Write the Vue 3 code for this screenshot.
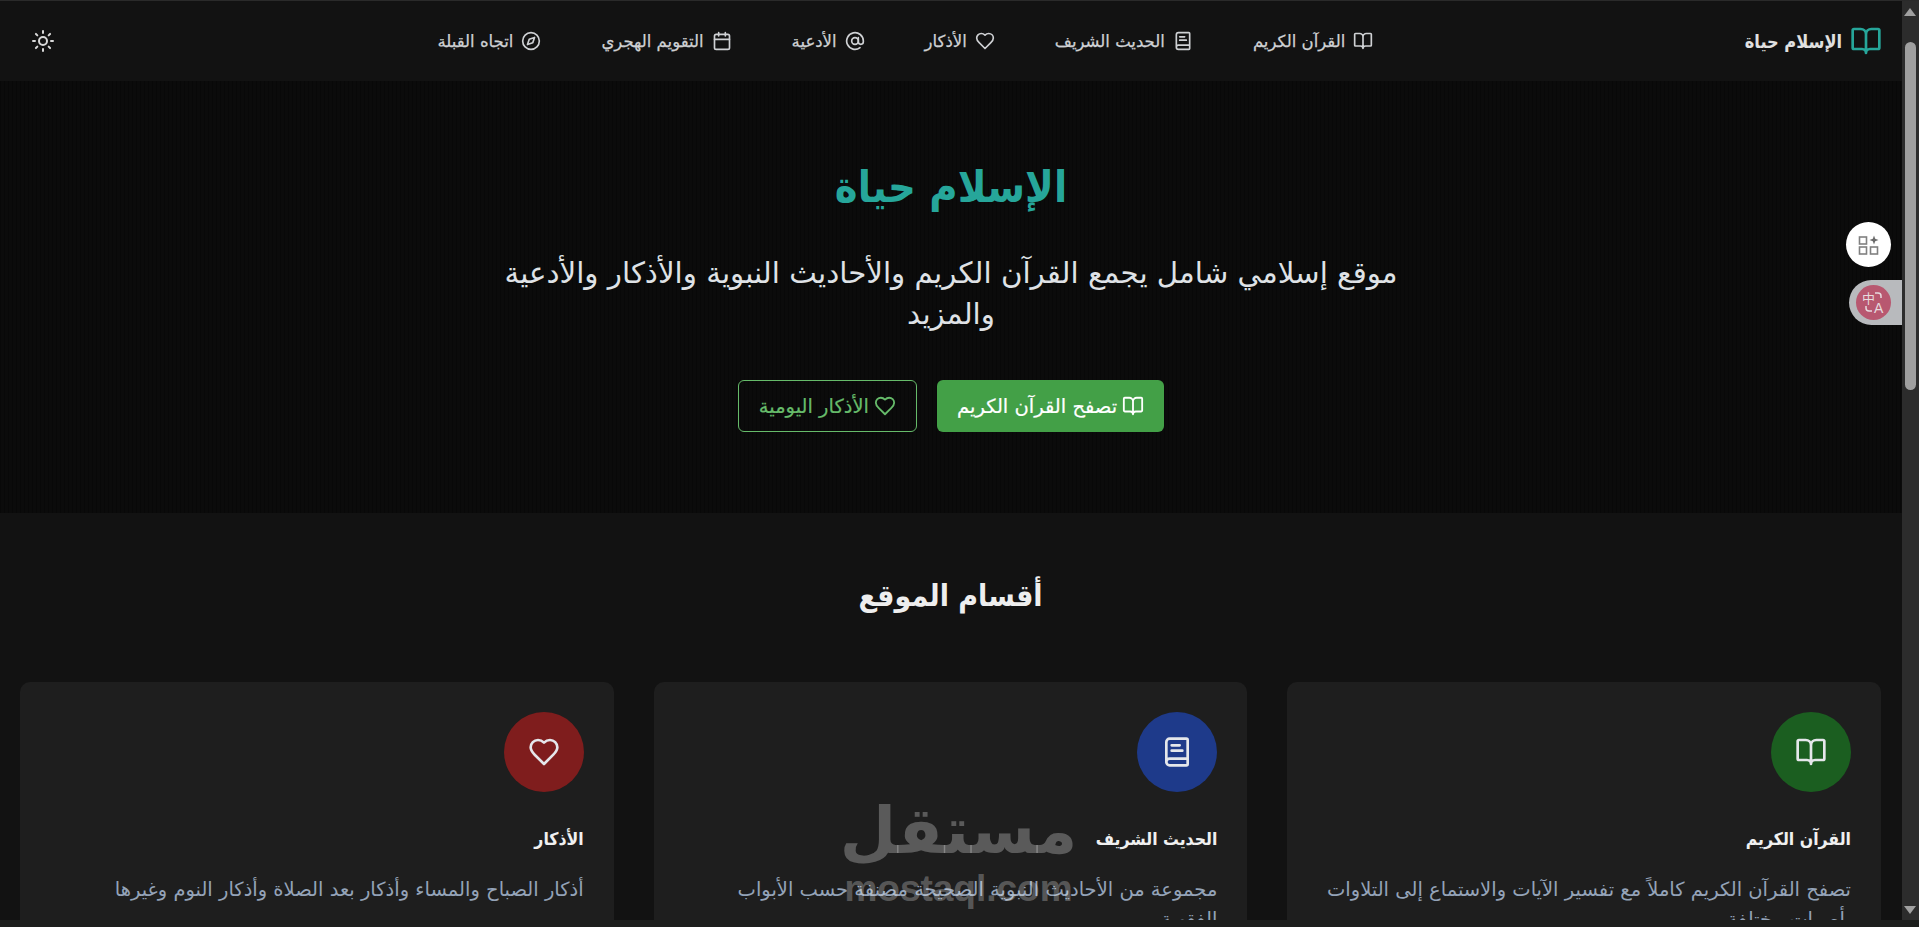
<template>
  <div class="screen">
    <div class="top-line"></div>
    <div class="window">
      <div class="page" dir="rtl">
        <header class="topbar">
          <a class="brand">
            <svg class="brand-icon" viewBox="0 0 24 24"><path :d="bookPath" /></svg>
            <span>الإسلام حياة</span>
          </a>
          <nav class="nav">
            <a v-for="item in navItems" :key="item.label" class="nav-link">
              <svg class="nav-icon" viewBox="0 0 24 24"><path v-for="d in item.icon" :key="d" :d="d" /></svg>
              <span>{{ item.label }}</span>
            </a>
          </nav>
          <svg class="theme-icon" viewBox="0 0 24 24">
            <circle cx="12" cy="12" r="4" />
            <path d="M12 2v2M12 20v2M4.93 4.93l1.41 1.41M17.66 17.66l1.41 1.41M2 12h2M20 12h2M6.34 17.66l-1.41 1.41M19.07 4.93l-1.41 1.41" />
          </svg>
        </header>

        <section class="hero">
          <h1>الإسلام حياة</h1>
          <p>موقع إسلامي شامل يجمع القرآن الكريم والأحاديث النبوية والأذكار والأدعية والمزيد</p>
          <div class="hero-buttons">
            <a class="btn btn-primary">
              <svg viewBox="0 0 24 24"><path :d="bookPath" /></svg>
              تصفح القرآن الكريم
            </a>
            <a class="btn btn-outline">
              <svg viewBox="0 0 24 24"><path :d="heartPath" /></svg>
              الأذكار اليومية
            </a>
          </div>
        </section>

        <section class="sections">
          <h2>أقسام الموقع</h2>
          <div class="cards">
            <article v-for="card in cards" :key="card.title" class="card">
              <div class="card-icon" :class="card.color">
                <svg viewBox="0 0 24 24"><path v-for="d in card.icon" :key="d" :d="d" /></svg>
              </div>
              <h3>{{ card.title }}</h3>
              <p>{{ card.text }}</p>
            </article>
          </div>
        </section>
      </div>

      <div class="scrollbar">
        <span class="arrow arrow-up"></span>
        <span class="thumb"></span>
        <span class="arrow arrow-down"></span>
      </div>

      <!-- floating browser extension buttons -->
      <div class="float-apps">
        <svg viewBox="0 0 22 22">
          <rect x="1.5" y="3" width="7" height="7" />
          <rect x="1.5" y="13" width="7" height="7" />
          <rect x="12.5" y="13" width="7" height="7" />
          <path class="spark" d="M16 1.5l1.2 3.3 3.3 1.2-3.3 1.2-1.2 3.3-1.2-3.3-3.3-1.2 3.3-1.2z" />
        </svg>
      </div>
      <div class="float-translate">
        <div class="translate-circle">
          <span class="zh">中</span>
          <span class="en">A</span>
          <svg viewBox="0 0 35 35">
            <path d="M19 8h3a3 3 0 0 1 3 3v2M10 21v2a3 3 0 0 0 3 3h3" />
          </svg>
        </div>
      </div>

      <div class="watermark">
        <span class="wm-ar" dir="rtl">مستقل</span>
        <span class="wm-en">mostaql.com</span>
      </div>
    </div>
    <div class="bottom-strip"></div>
  </div>
</template>

<script setup>
const bookPath = 'M12 7v14M3 18a1 1 0 0 1-1-1V4a1 1 0 0 1 1-1h5a4 4 0 0 1 4 4 4 4 0 0 1 4-4h5a1 1 0 0 1 1 1v13a1 1 0 0 1-1 1h-6a3 3 0 0 0-3 3 3 3 0 0 0-3-3z'
const heartPath = 'M19 14c1.49-1.46 3-3.21 3-5.5A5.5 5.5 0 0 0 16.5 3c-1.76 0-3 .5-4.5 2-1.5-1.5-2.74-2-4.5-2A5.5 5.5 0 0 0 2 8.5c0 2.3 1.5 4.05 3 5.5l7 7Z'
const hadithIcon = [
  'M4 19.5v-15A2.5 2.5 0 0 1 6.5 2H19a1 1 0 0 1 1 1v18a1 1 0 0 1-1 1H6.5a1 1 0 0 1 0-5H20',
  'M8 7h6M8 11h8'
]

const navItems = [
  { label: 'القرآن الكريم', icon: [bookPath] },
  { label: 'الحديث الشريف', icon: hadithIcon },
  { label: 'الأذكار', icon: [heartPath] },
  { label: 'الأدعية', icon: ['M12 8a4 4 0 1 0 0 8 4 4 0 0 0 0-8z', 'M16 8v5a3 3 0 0 0 6 0v-1a10 10 0 1 0-4 8'] },
  { label: 'التقويم الهجري', icon: ['M8 2v4M16 2v4', 'M5 4h14a2 2 0 0 1 2 2v14a2 2 0 0 1-2 2H5a2 2 0 0 1-2-2V6a2 2 0 0 1 2-2z', 'M3 10h18'] },
  { label: 'اتجاه القبلة', icon: ['M12 2a10 10 0 1 0 0 20 10 10 0 0 0 0-20z', 'M16.24 7.76l-2.12 6.36-6.36 2.12 2.12-6.36z'] }
]

const cards = [
  { title: 'القرآن الكريم', text: 'تصفح القرآن الكريم كاملاً مع تفسير الآيات والاستماع إلى التلاوات بأصوات مختلفة', color: 'green', icon: [bookPath] },
  { title: 'الحديث الشريف', text: 'مجموعة من الأحاديث النبوية الصحيحة مصنفة حسب الأبواب الفقهية', color: 'blue', icon: hadithIcon },
  { title: 'الأذكار', text: 'أذكار الصباح والمساء وأذكار بعد الصلاة وأذكار النوم وغيرها', color: 'red', icon: [heartPath] }
]
</script>

<style>
html, body {
  margin: 0;
  overflow: hidden;
  background: #121212;
}
</style>

<style scoped>
.screen {
  width: 1919px;
  height: 927px;
  display: flex;
  flex-direction: column;
  overflow: hidden;
  font-family: "DejaVu Sans", "Liberation Sans", sans-serif;
  color: #e5e7eb;
}

.top-line {
  height: 1px;
  background: #2a2a2a;
  flex: none;
}

.window {
  flex: 1;
  min-height: 0;
  display: flex;
  position: relative;
  overflow: hidden;
}

.page {
  flex: 1;
  min-width: 0;
  overflow: hidden;
  background: #121212;
}

.bottom-strip {
  height: 7px;
  flex: none;
  background: #1c1e1c;
}

/* header */
.topbar {
  height: 80px;
  display: flex;
  align-items: center;
  justify-content: space-between;
  padding: 0 20px 0 31px;
  background: #121212;
}

.brand {
  display: flex;
  align-items: center;
  gap: 8px;
  font-family: "DejaVu Sans Condensed", "DejaVu Sans", sans-serif;
  font-size: 18px;
  font-weight: 700;
  color: #e0e0e0;
}

.brand-icon {
  width: 32px;
  height: 32px;
  fill: none;
  stroke: #26a69a;
  stroke-width: 2;
  stroke-linecap: round;
  stroke-linejoin: round;
}

.nav {
  display: flex;
  align-items: center;
  gap: 36px;
  margin-left: 11px;
}

.nav-link {
  display: flex;
  align-items: center;
  gap: 8px;
  padding: 8px 12px;
  font-size: 16.5px;
  color: #cfd1d4;
  -webkit-text-stroke: 0.25px #cfd1d4;
}

.nav-icon {
  width: 20px;
  height: 20px;
  fill: none;
  stroke: currentColor;
  stroke-width: 2;
  stroke-linecap: round;
  stroke-linejoin: round;
}

.theme-icon {
  width: 24px;
  height: 24px;
  fill: none;
  stroke: #d8d8d8;
  stroke-width: 2;
  stroke-linecap: round;
  stroke-linejoin: round;
}

/* hero */
.hero {
  height: 432px;
  box-sizing: border-box;
  padding-top: 72px;
  background-color: #0b0b0b;
  background-image: repeating-linear-gradient(90deg, rgba(0, 0, 0, 0.25) 0 1px, transparent 1px 4px);
  display: flex;
  flex-direction: column;
  align-items: center;
  text-align: center;
}

.hero h1 {
  margin: 0 0 32px;
  font-family: "DejaVu Sans Condensed", "DejaVu Sans", sans-serif;
  font-size: 43px;
  line-height: 68px;
  font-weight: 700;
  color: #26a69a;
}

.hero p {
  margin: 0 0 45px;
  max-width: 900px;
  font-size: 29.3px;
  line-height: 41px;
  color: #dfe2e6;
}

.hero-buttons {
  display: flex;
  gap: 20px;
}

.btn {
  display: flex;
  align-items: center;
  gap: 5px;
  height: 52px;
  box-sizing: border-box;
  padding: 0 20px;
  border-radius: 6px;
  font-size: 19.5px;
  -webkit-text-stroke: 0.2px currentColor;
}

.btn svg {
  width: 22px;
  height: 22px;
  fill: none;
  stroke: currentColor;
  stroke-width: 2;
  stroke-linecap: round;
  stroke-linejoin: round;
}

.btn-primary {
  background: #43a047;
  color: #fff;
}

.btn-outline {
  border: 1px solid #66bb6a;
  color: #66bb6a;
}

/* sections */
.sections {
  padding: 63px 21px 0 20px;
}

.sections h2 {
  margin: 0 0 66px;
  text-align: center;
  font-family: "DejaVu Sans Condensed", "DejaVu Sans", sans-serif;
  font-size: 30px;
  line-height: 40px;
  font-weight: 700;
  color: #eeeeee;
}

.cards {
  display: grid;
  grid-template-columns: repeat(3, 1fr);
  gap: 40px;
}

.card {
  padding: 30px;
  background: #1e1e1e;
  border-radius: 10px;
}

.card-icon {
  width: 80px;
  height: 80px;
  border-radius: 50%;
  display: flex;
  align-items: center;
  justify-content: center;
  margin-bottom: 33px;
}

.card-icon svg {
  width: 32px;
  height: 32px;
  fill: none;
  stroke: #e5e7eb;
  stroke-width: 2;
  stroke-linecap: round;
  stroke-linejoin: round;
}

.green { background: #1b5e20; }
.blue { background: #1e3a8a; }
.red { background: #7f1d1d; }

.card h3 {
  margin: 0 0 22px;
  font-family: "DejaVu Sans Condensed", "DejaVu Sans", sans-serif;
  font-size: 17.5px;
  line-height: 28px;
  font-weight: 700;
  color: #f0f0f0;
}

.card p {
  margin: 0;
  font-size: 19.5px;
  line-height: 30px;
  color: #94a3b8;
}

/* fake scrollbar */
.scrollbar {
  width: 17px;
  flex: none;
  position: relative;
  background: #2c2c2c;
}

.thumb {
  position: absolute;
  top: 41px;
  left: 3px;
  width: 11px;
  height: 348px;
  border-radius: 6px;
  background: #9f9f9f;
}

.arrow {
  position: absolute;
  left: 2px;
  width: 0;
  height: 0;
  border-left: 6.5px solid transparent;
  border-right: 6.5px solid transparent;
}

.arrow-up {
  top: 7px;
  border-bottom: 8px solid #a0a0a0;
}

.arrow-down {
  bottom: 6px;
  border-top: 8px solid #a0a0a0;
}

/* floating buttons */
.float-apps {
  position: absolute;
  top: 221px;
  left: 1846px;
  width: 45px;
  height: 45px;
  border-radius: 50%;
  background: #fff;
  display: flex;
  align-items: center;
  justify-content: center;
}

.float-apps svg {
  width: 22px;
  height: 22px;
  fill: none;
  stroke: #808080;
  stroke-width: 1.6;
}

.float-apps .spark {
  fill: #6b6b6b;
  stroke: none;
}

.float-translate {
  position: absolute;
  top: 279px;
  left: 1849px;
  width: 53px;
  height: 45px;
  box-sizing: border-box;
  border-radius: 23px 0 0 23px;
  background: #b8babd;
  display: flex;
  align-items: center;
  padding-left: 7px;
}

.translate-circle {
  position: relative;
  width: 35px;
  height: 35px;
  border-radius: 50%;
  background: #b85870;
  color: #e6dade;
  font-family: "Noto Sans CJK SC", "Liberation Sans", sans-serif;
}

.translate-circle svg {
  position: absolute;
  inset: 0;
  fill: none;
  stroke: #e6dade;
  stroke-width: 1.5;
}

.zh {
  position: absolute;
  top: 6px;
  left: 6px;
  font-size: 13px;
  line-height: 14px;
}

.en {
  position: absolute;
  top: 15px;
  left: 18px;
  font-family: "Liberation Sans", sans-serif;
  font-size: 14px;
  line-height: 16px;
}

/* mostaql watermark */
.watermark {
  position: absolute;
  top: 790px;
  left: 844px;
  width: 229px;
  display: flex;
  flex-direction: column;
  align-items: center;
  color: rgba(255, 255, 255, 0.27);
  pointer-events: none;
}

.wm-ar {
  font-size: 65px;
  line-height: 80px;
  font-weight: 700;
}

.wm-en {
  font-family: "Liberation Sans", sans-serif;
  font-size: 37px;
  line-height: 36px;
  font-weight: 700;
}
</style>
